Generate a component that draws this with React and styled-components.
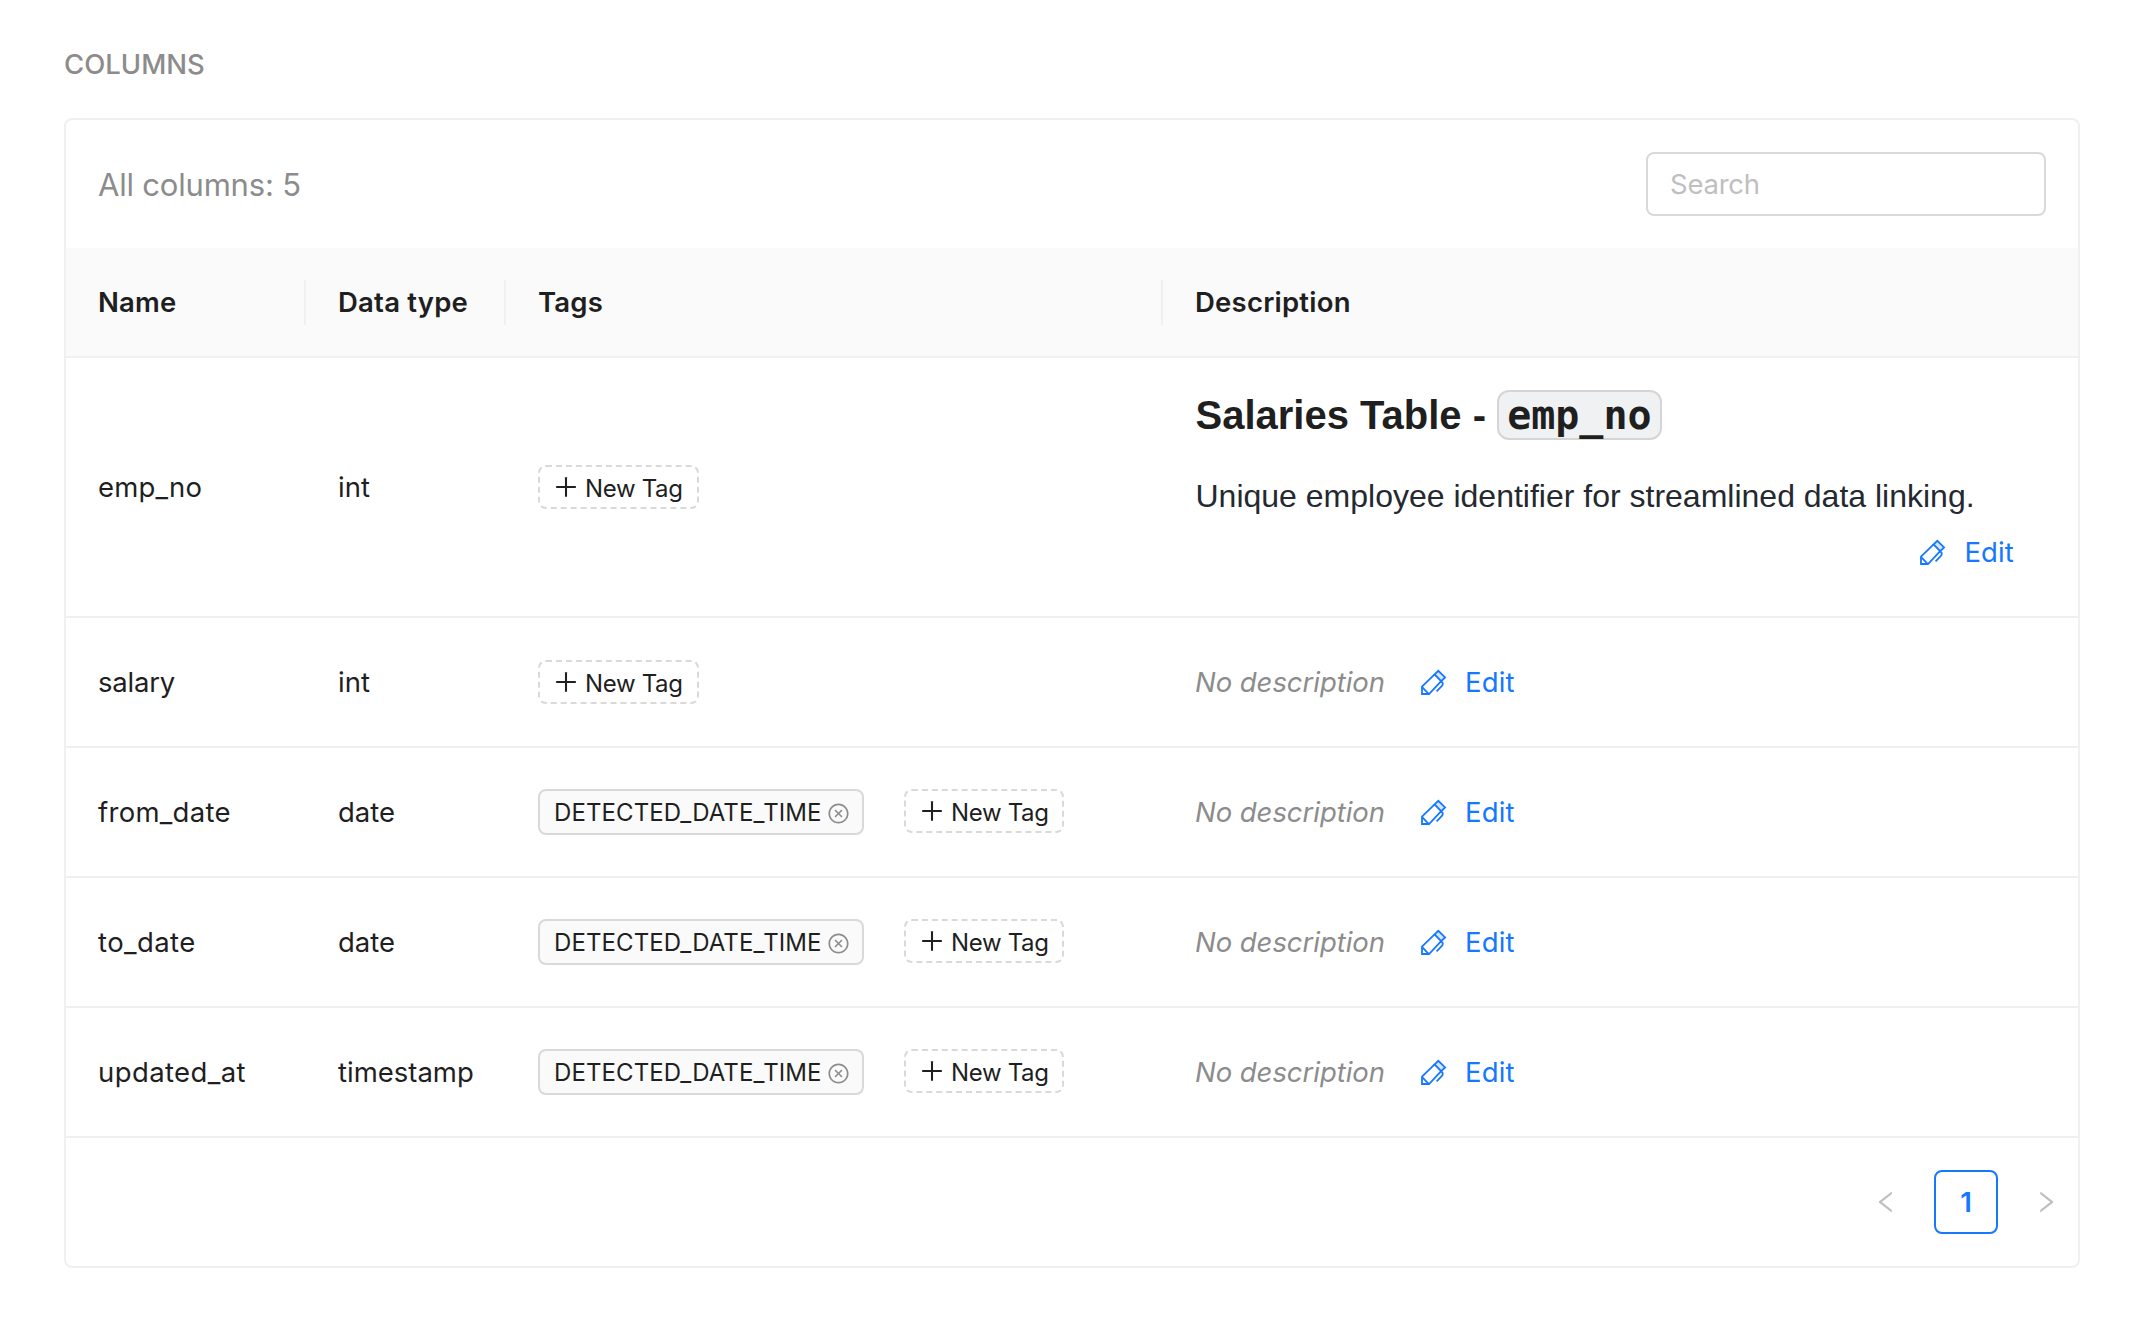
import React from 'react';
import styled, { createGlobalStyle, css } from 'styled-components';
import {
  AiOutlinePlus,
  AiOutlineCloseCircle,
  AiOutlineLeft,
  AiOutlineRight,
} from 'react-icons/ai';

const GlobalStyle = createGlobalStyle`
  *, *::before, *::after { box-sizing: border-box; }
  body {
    margin: 0;
    background: #fff;
    color: #1f1f1f;
    font-family: Inter, "Liberation Sans", sans-serif;
    font-size: 27.5px;
    line-height: 44px;
  }
`;

const Page = styled.main`
  padding: 42px 74px 68px 64px;
`;

const SectionTitle = styled.h2`
  margin: 0 0 32px;
  font-size: 27.5px;
  font-weight: 500;
  line-height: 44px;
  color: #8c8c8c;
`;

const Card = styled.section`
  border: 2px solid #f0f0f0;
  border-radius: 8px;
  overflow: hidden;
`;

const Toolbar = styled.div`
  display: flex;
  align-items: center;
  justify-content: space-between;
  padding: 32px;
`;

const Count = styled.span`
  padding-top: 2px;
  font-size: 31px;
  letter-spacing: -0.2px;
  color: #8c8c8c;
`;

const SearchInput = styled.input`
  width: 400px;
  height: 64px;
  padding: 0 22px;
  border: 2px solid #d9d9d9;
  border-radius: 8px;
  font: inherit;
  letter-spacing: -0.25px;
  outline: none;
  &::placeholder {
    color: #bfbfbf;
    opacity: 1;
  }
`;

const Table = styled.table`
  width: 100%;
  table-layout: fixed;
  border-collapse: separate;
  border-spacing: 0;
`;

const Col = styled.col`
  width: ${(p) => p.$width || 'auto'};
`;

const HeadCell = styled.th`
  height: 110px;
  padding: 0;
  background: #fafafa;
  border-bottom: 2px solid #f0f0f0;
  text-align: left;
  font-weight: 600;
  letter-spacing: 0.22px;
`;

const HeadLabel = styled.div`
  height: 45px;
  padding-left: 32px;
  ${(p) => p.$divided && css`border-right: 2px solid #f0f0f0;`}
`;

const Cell = styled.td`
  padding: 32px;
  height: 130px;
  border-bottom: 2px solid #f0f0f0;
  vertical-align: middle;
  letter-spacing: ${(p) => p.$tracking || 0}px;
`;

const TagList = styled.div`
  display: flex;
  align-items: flex-start;
  gap: 40px;
`;

const tagBase = css`
  display: flex;
  align-items: center;
  border-radius: 8px;
  font-size: 24px;
  white-space: nowrap;
`;

const Tag = styled.span`
  ${tagBase}
  width: 326px;
  height: 46px;
  padding: 2px 12px 0 14px;
  justify-content: space-between;
  border: 2px solid #d9d9d9;
  background: #fafafa;
  letter-spacing: 0.1px;
  svg { color: #8c8c8c; }
`;

const NewTag = styled.button`
  ${tagBase}
  width: ${(p) => (p.$afterTag ? 160 : 161)}px;
  height: 44px;
  padding: 0 0 0 12px;
  gap: 5px;
  border: 2px dashed #d9d9d9;
  background: #fff;
  color: inherit;
  font-family: inherit;
  letter-spacing: -0.35px;
  svg { flex: none; }
`;

const NewTagLabel = styled.span`
  padding-top: 2px;
`;

const DescriptionLine = styled.div`
  display: flex;
  align-items: center;
`;

const Empty = styled.i`
  width: 193px;
  color: #8c8c8c;
  letter-spacing: -0.05px;
  white-space: nowrap;
`;

const EditButton = styled.button`
  display: flex;
  align-items: center;
  height: 64px;
  padding: 0 32px;
  gap: 17px;
  border: 0;
  background: none;
  color: #1677ff;
  font: inherit;
  letter-spacing: 0.15px;
  svg { margin-top: 2px; }
`;

const Markdown = styled.div`
  display: flex;
  flex-direction: column;
  align-items: flex-start;
  padding-left: 0.5px;
  font-family: "Liberation Sans", Arial, sans-serif;
  white-space: nowrap;
`;

const MarkdownTitle = styled.h3`
  height: 50px;
  margin: 0 0 32px;
  font-size: 40px;
  font-weight: 700;
  line-height: 50px;
`;

const Code = styled.code`
  display: inline-block;
  height: 50px;
  padding: 0 8px;
  border: 2px solid #d5d5d6;
  border-radius: 12px;
  background: #f0f1f3;
  font-family: "DejaVu Sans Mono", monospace;
  font-size: 40px;
  line-height: 46px;
`;

const Paragraph = styled.p`
  margin: 0;
  font-size: 32px;
  line-height: 48px;
  color: #24292f;
`;

const EditSlot = styled.div`
  display: flex;
  justify-content: flex-end;
`;

const Pagination = styled.nav`
  display: flex;
  justify-content: flex-end;
  gap: 16px;
  padding: 32px 0;
`;

const PageButton = styled.button`
  display: flex;
  align-items: center;
  justify-content: center;
  width: 64px;
  height: 64px;
  padding: 0;
  border: 2px solid ${(p) => (p.$active ? '#1677ff' : 'transparent')};
  border-radius: 8px;
  background: #fff;
  color: ${(p) => (p.$active ? '#1677ff' : '#bfbfbf')};
  font: inherit;
  font-weight: 600;
`;

const PencilIcon = () => (
  <svg width="28" height="28" viewBox="0 0 28 28" fill="none" stroke="currentColor" strokeWidth="1.8">
    <path d="M14.6 5.4 18.3 1.8 25.1 8.4 21.2 12.2Z" fill="#d6e6ff" />
    <path d="M14.6 5.4 2 17.6V25H9L21.2 12.2" />
    <path d="M2.4 18.4 8.4 24.6" />
    <path d="M21 12.2 22.8 14.2 22.4 16.4 16.6 22.4" />
  </svg>
);

const Edit = () => (
  <EditButton>
    <PencilIcon />
    <span>Edit</span>
  </EditButton>
);

const columns = [
  { name: 'emp_no', type: 'int', documented: true, tracking: 0.15 },
  { name: 'salary', type: 'int', tracking: -0.2 },
  { name: 'from_date', type: 'date', tag: 'DETECTED_DATE_TIME', tracking: 0.28 },
  { name: 'to_date', type: 'date', tag: 'DETECTED_DATE_TIME', tracking: 0.4 },
  { name: 'updated_at', type: 'timestamp', tag: 'DETECTED_DATE_TIME', tracking: 0.4 },
];

const headings = ['Name', 'Data type', 'Tags', 'Description'];

const Description = ({ documented }) =>
  documented ? (
    <>
      <Markdown>
        <MarkdownTitle>
          Salaries Table - <Code>emp_no</Code>
        </MarkdownTitle>
        <Paragraph>Unique employee identifier for streamlined data linking.</Paragraph>
      </Markdown>
      <EditSlot>
        <Edit />
      </EditSlot>
    </>
  ) : (
    <DescriptionLine>
      <Empty>No description</Empty>
      <Edit />
    </DescriptionLine>
  );

export default function App() {
  return (
    <>
      <GlobalStyle />
      <Page>
        <SectionTitle>COLUMNS</SectionTitle>
        <Card>
          <Toolbar>
            <Count>All columns: 5</Count>
            <SearchInput placeholder="Search" />
          </Toolbar>
          <Table>
            <colgroup>
              <Col $width="240px" />
              <Col $width="200px" />
              <Col $width="657px" />
              <Col />
            </colgroup>
            <thead>
              <tr>
                {headings.map((label, i) => (
                  <HeadCell key={label}>
                    <HeadLabel $divided={i < headings.length - 1}>{label}</HeadLabel>
                  </HeadCell>
                ))}
              </tr>
            </thead>
            <tbody>
              {columns.map((column) => (
                <tr key={column.name}>
                  <Cell $tracking={column.tracking}>{column.name}</Cell>
                  <Cell>{column.type}</Cell>
                  <Cell>
                    <TagList>
                      {column.tag && (
                        <Tag>
                          {column.tag}
                          <AiOutlineCloseCircle size={23} />
                        </Tag>
                      )}
                      <NewTag $afterTag={Boolean(column.tag)}>
                        <AiOutlinePlus size={28} />
                        <NewTagLabel>New Tag</NewTagLabel>
                      </NewTag>
                    </TagList>
                  </Cell>
                  <Cell>
                    <Description documented={column.documented} />
                  </Cell>
                </tr>
              ))}
            </tbody>
          </Table>
          <Pagination>
            <PageButton><AiOutlineLeft size={28} /></PageButton>
            <PageButton $active>1</PageButton>
            <PageButton><AiOutlineRight size={28} /></PageButton>
          </Pagination>
        </Card>
      </Page>
    </>
  );
}
